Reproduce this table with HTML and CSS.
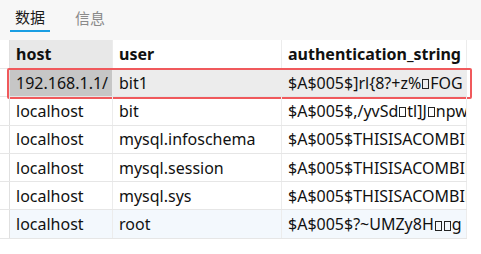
FILE: index.html
```html
<!DOCTYPE html>
<html>
<head>
<meta charset="utf-8">
<link rel="stylesheet" href="styles.css">
</head>
<body>
<div class="toolbar">
  <div class="tab active">数据</div>
  <div class="tab">信息</div>
</div>
<div class="grid">
  <div class="row head">
    <div class="gut"></div>
    <div class="cell c1 sorted">host</div>
    <div class="cell c2">user</div>
    <div class="cell c3">authentication_string</div>
  </div>
  <div class="row sel">
    <div class="gut"></div>
    <div class="cell c1 cur">192.168.1.1/</div>
    <div class="cell c2">bit1</div>
    <div class="cell c3">$A$005$]rl{8?+z%<span class="g"></span>FOG</div>
  </div>
  <div class="row">
    <div class="gut"></div>
    <div class="cell c1">localhost</div>
    <div class="cell c2">bit</div>
    <div class="cell c3">$A$005$,/yvSd<span class="g"></span>tl]J<span class="g"></span>npw</div>
  </div>
  <div class="row">
    <div class="gut"></div>
    <div class="cell c1">localhost</div>
    <div class="cell c2">mysql.infoschema</div>
    <div class="cell c3">$A$005$THISISACOMBINATION</div>
  </div>
  <div class="row">
    <div class="gut"></div>
    <div class="cell c1">localhost</div>
    <div class="cell c2">mysql.session</div>
    <div class="cell c3">$A$005$THISISACOMBINATION</div>
  </div>
  <div class="row">
    <div class="gut"></div>
    <div class="cell c1">localhost</div>
    <div class="cell c2">mysql.sys</div>
    <div class="cell c3">$A$005$THISISACOMBINATION</div>
  </div>
  <div class="row hover">
    <div class="gut"></div>
    <div class="cell c1">localhost</div>
    <div class="cell c2">root</div>
    <div class="cell c3">$A$005$?~UMZy8H<span class="g"></span><span class="g"></span>g</div>
  </div>
</div>
</body>
</html>
```
FILE: styles.css
```css
html, body {
  margin: 0;
  padding: 0;
  background: #ffffff;
}
body {
  font-family: "Noto Sans", "Noto Sans CJK SC", sans-serif;
  font-size: 16px;
  color: #111111;
  width: 481px;
  height: 254px;
  overflow: hidden;
}
.toolbar {
  height: 40px;
  background: #f7f7f7;
  display: flex;
  padding-left: 10px;
  gap: 20px;
  box-sizing: border-box;
}
.tab {
  width: 40px;
  height: 32px;
  box-sizing: border-box;
  display: flex;
  align-items: center;
  justify-content: center;
  font-family: "Noto Sans CJK SC", sans-serif;
  font-size: 15px;
  color: #8a8a8a;
  padding-top: 2px;
}
.tab.active {
  color: #1b1b1b;
  border-bottom: 2px solid #1a9ee3;
}
.grid {
  width: 467px;
}
.row {
  display: grid;
  grid-template-columns: 10px 103px 169px 185px;
  height: 27.3px;
  border-bottom: 1px solid #e6e6e6;
  position: relative;
}
.row.head {
  height: 28px;
  font-weight: bold;
}
.gut {
  border-right: 1px solid #e0e0e0;
}
.cell {
  display: flex;
  align-items: center;
  padding-left: 6px;
  white-space: nowrap;
  overflow: hidden;
  border-right: 1px solid #ececec;
}
.g {
  display: inline-block;
  width: 5px;
  height: 8px;
  border: 1px solid #222222;
  margin: 3px 1px 0 1px;
  flex: none;
}
.sorted {
  background: #e8e8e8;
}
.row.sel .cell {
  background: #ececec;
}
.row.sel .cell.cur {
  background: #c6c6c6;
}
.row.sel::after {
  content: "";
  position: absolute;
  left: 7px;
  right: -5px;
  top: -1px;
  bottom: -3px;
  border: 2px solid #f0595c;
  border-radius: 2px;
}
.row.hover .cell {
  background: #f3f8fd;
}
```
